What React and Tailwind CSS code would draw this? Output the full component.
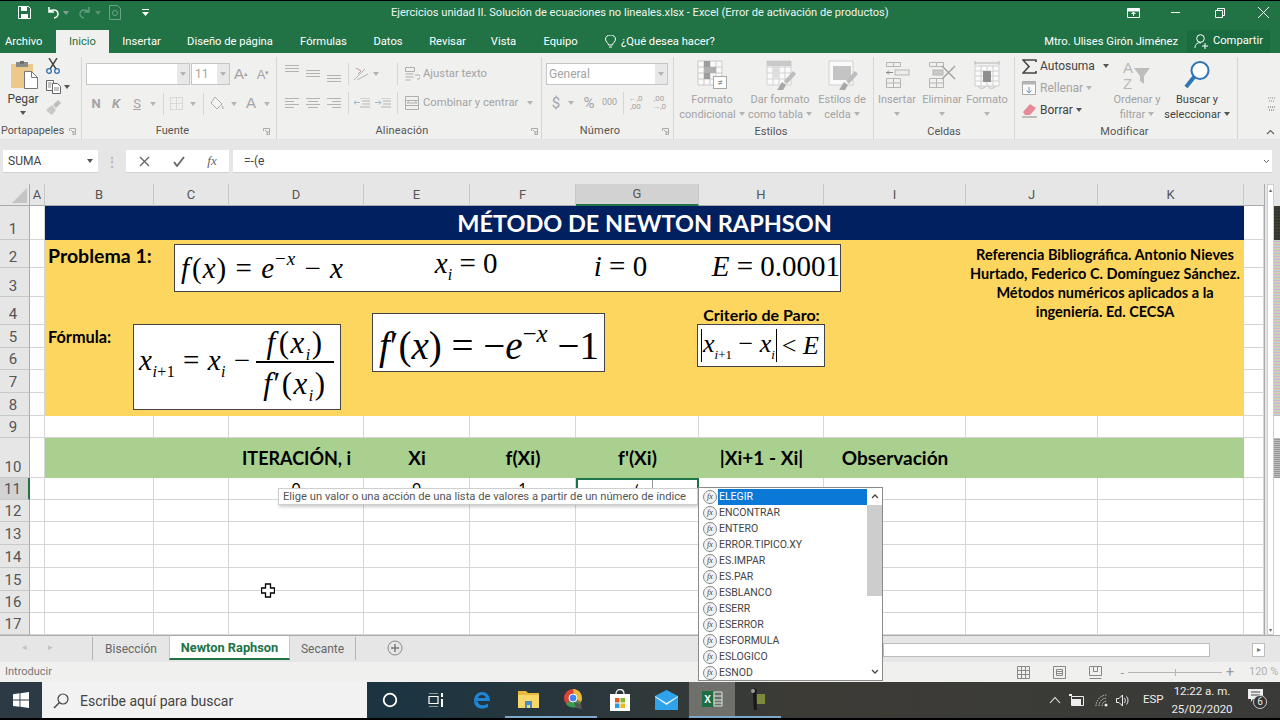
const cols = ["B", "C", "D", "E", "F", "G", "H", "I", "J", "K"];
const gridCols = "grid-cols-[30px_15px_109px_75px_135px_106px_106px_123px_125px_142px_132px_146px_20px]";
const gridRows = "grid-rows-[22px_34px_28px_29px_28px_23px_22px_23px_23px_22px_40px_22px_22px_23px_23px_23px_22px_22px]";
const lowRows = [12, 13, 14, 15, 16, 17];
const funcs = ["ELEGIR", "ENCONTRAR", "ENTERO", "ERROR.TIPICO.XY", "ES.IMPAR", "ES.PAR", "ESBLANCO", "ESERR", "ESERROR", "ESFORMULA", "ESLOGICO", "ESNOD"];
const tabs = [
  ["Insertar", "w-[65px]"],
  ["Diseño de página", "w-[112px]"],
  ["Fórmulas", "w-[75px]"],
  ["Datos", "w-[54px]"],
  ["Revisar", "w-[65px]"],
  ["Vista", "w-[47px]"],
  ["Equipo", "w-[67px]"],
];

function Caret({ dark, className = "" }) {
  return (
    <svg width="6" height="4" viewBox="0 0 6 4" className={className}>
      <path d="M0 0h6L3 4z" fill={dark ? "#555" : "#b4b4b4"} />
    </svg>
  );
}

function Launcher() {
  return (
    <svg width="7" height="7" viewBox="0 0 7 7">
      <path d="M.5 3V.5H6.500V6.500H3.500M2 2l3 3M5 3v2H3" fill="none" stroke="#aaa" />
    </svg>
  );
}

function Sep({ h = "h-[22px]", className = "" }) {
  return <div className={`w-px bg-[#d5d5d5] ${h} ${className}`} />;
}

function GroupLabel({ children, w, launcher }) {
  return (
    <div className="h-[16px] pt-[1px] flex items-center text-[11px] text-[#555] tracking-[.2px]">
      <div className={`${w} text-center`}>{children}</div>
      {launcher && <div className="ml-[4px] flex"><Launcher /></div>}
    </div>
  );
}

function Lines({ aligns }) {
  // small stack of text lines for the alignment buttons
  return (
    <svg width="14" height="11" viewBox="0 0 14 11">
      {aligns.map((a, i) => (
        <rect key={i} x={a[0]} y={i * 3} width={a[1]} height="1" fill="#b3b3b3" />
      ))}
    </svg>
  );
}

function VAlign({ y }) {
  return (
    <svg width="14" height="18" viewBox="0 0 14 18">
      {[0, 3, 6].map((d) => (
        <rect key={d} x="0" y={y + d} width="14" height="1" fill="#b3b3b3" />
      ))}
    </svg>
  );
}

function Paste() {
  return (
    <svg width="28" height="28" viewBox="0 0 28 28">
      <rect x="0" y="3" width="22" height="24" fill="#ecc98a" />
      <rect x="5" y="1" width="12" height="5" fill="#8a8a8a" />
      <rect x="9" y="0" width="4" height="3" fill="#6f6f6f" />
      <path d="M13.500 10.500h7l6 6v11h-13z" fill="#fff" stroke="#777" />
      <path d="M20.500 10.500v6h6" fill="none" stroke="#777" />
    </svg>
  );
}

function Scissors() {
  return (
    <svg width="14" height="16" viewBox="0 0 14 16">
      <path d="M3 0l7 11M11 0L4 11" stroke="#444" strokeWidth="1.400" fill="none" />
      <circle cx="3" cy="13" r="2.300" fill="none" stroke="#2f6fa8" strokeWidth="1.300" />
      <circle cx="11" cy="13" r="2.300" fill="none" stroke="#2f6fa8" strokeWidth="1.300" />
    </svg>
  );
}

function CopyIcon() {
  return (
    <svg width="15" height="14" viewBox="0 0 15 14">
      <path d="M.5.500h7v10h-7z" fill="#fff" stroke="#666" />
      <path d="M6.500 3.500h5l3 3v7h-8z" fill="#fff" stroke="#666" />
      <path d="M8 8h5M8 10h5M2 3h4M2 5h3M2 7h3" stroke="#888" />
    </svg>
  );
}

function Brush() {
  return (
    <svg width="16" height="15" viewBox="0 0 16 15">
      <path d="M0 10l6-5 4 5-4 5-3-2z" fill="#c8c8c8" />
      <path d="M7 5l5-5 3 3-5 5z" fill="#bdbdbd" />
    </svg>
  );
}

function CellsIcon({ children }) {
  return (
    <svg width="34" height="30" viewBox="0 0 34 30">
      {children}
    </svg>
  );
}

function TableLines({ x = 0, y = 0, w = 24, h = 24, n = 4, color = "#c9c9c9" }) {
  const xs = [];
  for (let i = 0; i <= n; i++) xs.push(i);
  return (
    <g>
      <rect x={x} y={y} width={w} height={h} fill="#fafafa" />
      {xs.map((i) => (
        <path key={`v${i}`} d={`M${x + (i * w) / n} ${y}v${h}`} stroke={color} />
      ))}
      {xs.map((i) => (
        <path key={`h${i}`} d={`M${x} ${y + (i * h) / n}h${w}`} stroke={color} />
      ))}
    </g>
  );
}

function PaintTip() {
  return (
    <g>
      <path d="M14 30l5-8 4 3-3 5z" fill="#a8a8a8" />
      <path d="M21 21l9-10 3 3-9 10z" fill="#bdbdbd" />
    </g>
  );
}

function BigButton({ w, icon, lines, dark }) {
  const color = dark ? "text-[#444]" : "text-[#a3a3a3]";
  return (
    <div className={`${w} flex flex-col items-center`}>
      <div className="h-[33px] flex items-end justify-center">{icon}</div>
      <div className={`mt-[2px] text-[11px] leading-[15px] whitespace-nowrap text-center ${color}`}>
        <div>{lines[0]}</div>
        <div className="h-[14px] flex items-center justify-center gap-[3px]">
          {lines[1] && <span>{lines[1]}</span>}
          <Caret dark={dark} />
        </div>
      </div>
    </div>
  );
}

function Ribbon() {
  const inputBox = "h-[22px] bg-white border border-[#c6c6c6] flex items-stretch";
  const smallText = "text-[11.300px] text-[#a3a3a3]";
  return (
    <div className="h-[87px] bg-[#f0f0ef] flex pt-[4px] text-[#444] border-b border-[#e0e0e0]">
      {/* Portapapeles */}
      <div className="w-[82px] border-r border-[#d5d5d5] flex flex-col">
        <div className="flex-1 flex">
          <div className="w-[46px] flex flex-col items-center">
            <div className="pt-[4px] pl-[3px]"><Paste /></div>
            <div className="text-[12px] leading-[14px] mt-[3px]">Pegar</div>
            <Caret dark className="mt-[5px]" />
          </div>
          <div className="flex flex-col items-start">
            <div className="mt-[1px]"><Scissors /></div>
            <div className="mt-[6px] flex items-center gap-[3px]"><CopyIcon /><Caret dark /></div>
            <div className="mt-[6px]"><Brush /></div>
          </div>
        </div>
        <div className="h-[16px] pt-[1px] flex items-center text-[10.700px] text-[#555] whitespace-nowrap">
          <span className="ml-[1px] w-[68px]">Portapapeles</span>
          <Launcher />
        </div>
      </div>

      {/* Fuente */}
      <div className="w-[195px] border-r border-[#d5d5d5] flex flex-col">
        <div className="flex-1 pt-[6px]">
          <div className="flex items-center pl-[4px]">
            <div className={`${inputBox} w-[104px] justify-end`}>
              <div className="w-[12px] bg-[#e8e8e8] flex items-center justify-center"><Caret /></div>
            </div>
            <div className={`${inputBox} w-[39px] ml-[1px] justify-between`}>
              <span className="text-[12px] text-[#a3a3a3] pl-[3px] self-center">11</span>
              <div className="w-[12px] bg-[#e8e8e8] flex items-center justify-center"><Caret /></div>
            </div>
            <div className="w-[22px] text-center text-[15px] text-[#a3a3a3] font-['Liberation_Sans',sans-serif]">A<sup className="text-[7px]">▴</sup></div>
            <div className="w-[22px] text-center text-[13px] text-[#a3a3a3] font-['Liberation_Sans',sans-serif]">A<sup className="text-[7px]">▾</sup></div>
          </div>
          <div className="flex items-center pl-[4px] mt-[7px] h-[22px]">
            <div className="w-[20px] text-center text-[13px] font-bold text-[#a3a3a3]">N</div>
            <div className="w-[20px] text-center text-[13px] font-bold italic text-[#a3a3a3]">K</div>
            <div className="w-[22px] text-center text-[13px] underline text-[#a3a3a3]">S</div>
            <div className="w-[10px] flex justify-center"><Caret /></div>
            <Sep className="ml-[5px]" />
            <div className="w-[24px] flex justify-center">
              <svg width="13" height="13" viewBox="0 0 13 13"><path d="M.5.500h12v12H.500zM6.500.500v12M.5 6.500h12" fill="none" stroke="#c4c4c4" strokeDasharray="1 1" /></svg>
            </div>
            <div className="w-[10px] flex justify-center"><Caret /></div>
            <Sep className="ml-[5px]" />
            <div className="w-[26px] flex justify-center">
              <svg width="15" height="15" viewBox="0 0 15 15"><path d="M5 1l7 7-5 5-6-6z" fill="#f4f4f4" stroke="#adadad" /><path d="M12 9c2 2 2 4 1 4s-2-2-1-4z" fill="#bdbdbd" /></svg>
            </div>
            <div className="w-[8px] flex justify-center"><Caret /></div>
            <div className="w-[26px] text-center text-[15px] text-[#a3a3a3] font-['Liberation_Sans',sans-serif]">A</div>
            <div className="w-[6px] flex justify-center"><Caret /></div>
          </div>
        </div>
        <div className="h-[16px] pt-[1px] flex items-center text-[11px] text-[#555]">
          <div className="w-[181px] text-center">Fuente</div>
          <Launcher />
        </div>
      </div>

      {/* Alineación */}
      <div className="w-[265px] border-r border-[#d5d5d5] flex flex-col">
        <div className="flex-1 pt-[6px]">
          <div className="flex items-center pl-[4px] h-[22px]">
            <div className="w-[21px] flex justify-center"><VAlign y={0} /></div>
            <div className="w-[21px] flex justify-center"><VAlign y={5} /></div>
            <div className="w-[21px] flex justify-center"><VAlign y={10} /></div>
            <Sep className="ml-[4px]" />
            <div className="w-[24px] flex justify-center">
              <svg width="16" height="14" viewBox="0 0 16 14"><path d="M1 13L12 2M4 13l11-6" stroke="#b3b3b3" fill="none" /><path d="M3 1l5 3-3 3" stroke="#c79aa0" fill="none" /></svg>
            </div>
            <div className="w-[6px] flex justify-center"><Caret /></div>
            <Sep className="ml-[18px]" />
            <div className="ml-[7px] flex">
              <svg width="15" height="14" viewBox="0 0 15 14"><path d="M.5.500h9v4h-9zM.5 7h8M.5 10h8M.5 13h5M10 8h4a2 2 0 0 1-2 4" fill="none" stroke="#aeaeae" /></svg>
            </div>
            <div className={`${smallText} ml-[3px] whitespace-nowrap`}>Ajustar texto</div>
          </div>
          <div className="flex items-center pl-[4px] mt-[7px] h-[22px]">
            <div className="w-[21px] flex justify-center"><Lines aligns={[[0, 14], [0, 9], [0, 14], [0, 9]]} /></div>
            <div className="w-[21px] flex justify-center"><Lines aligns={[[0, 14], [2, 10], [0, 14], [2, 10]]} /></div>
            <div className="w-[21px] flex justify-center"><Lines aligns={[[0, 14], [5, 9], [0, 14], [5, 9]]} /></div>
            <Sep className="ml-[4px]" />
            <div className="w-[2px]" />
            <div className="w-[21px] flex justify-center">
              <svg width="16" height="11" viewBox="0 0 16 11"><path d="M6 0h10M8 3h8M8 6h8M6 9h10" stroke="#b3b3b3" /><path d="M6 4.500H0M2 2.500l-2 2 2 2" stroke="#9fb4c4" fill="none" /></svg>
            </div>
            <div className="w-[21px] flex justify-center">
              <svg width="16" height="11" viewBox="0 0 16 11"><path d="M6 0h10M8 3h8M8 6h8M6 9h10" stroke="#b3b3b3" /><path d="M0 4.500h6M4 2.500l2 2-2 2" stroke="#9fb4c4" fill="none" /></svg>
            </div>
            <Sep className="ml-[4px]" />
            <div className="ml-[7px] flex">
              <svg width="14" height="14" viewBox="0 0 14 14"><path d="M.5.500h13v13H.500zM.5 4.500h13M.5 9.500h13M2 7h10M2 7l2-1.500M12 7l-2-1.500" fill="none" stroke="#aeaeae" /></svg>
            </div>
            <div className={`${smallText} ml-[4px] w-[96px] whitespace-nowrap`}>Combinar y centrar</div>
            <Caret className="ml-[8px]" />
          </div>
        </div>
        <GroupLabel w="w-[250px]" launcher>Alineación</GroupLabel>
      </div>

      {/* Número */}
      <div className="w-[132px] border-r border-[#d5d5d5] flex flex-col">
        <div className="flex-1 pt-[6px]">
          <div className="pl-[4px]">
            <div className={`${inputBox} w-[122px] justify-between`}>
              <span className="text-[12px] text-[#a3a3a3] pl-[2px] self-center">General</span>
              <div className="w-[12px] bg-[#e8e8e8] flex items-center justify-center"><Caret /></div>
            </div>
          </div>
          <div className="flex items-center pl-[4px] mt-[7px] h-[22px] text-[#a3a3a3]">
            <div className="w-[20px] text-center text-[15px]">$</div>
            <div className="w-[10px] flex justify-center"><Caret /></div>
            <div className="w-[26px] text-center text-[15px]">%</div>
            <div className="w-[14px] text-center text-[9px]">000</div>
            <Sep className="ml-[7px]" />
            <div className="w-[23px] text-center text-[8px] leading-[8px] whitespace-nowrap">←,0<br />,00</div>
            <div className="w-[24px] text-center text-[8px] leading-[8px] whitespace-nowrap">,00<br />→,0</div>
          </div>
        </div>
        <GroupLabel w="w-[116px]" launcher>Número</GroupLabel>
      </div>

      {/* Estilos */}
      <div className="w-[200px] border-r border-[#d5d5d5] flex flex-col">
        <div className="flex-1 flex pl-[4px]">
          <BigButton
            w="w-[68px]"
            lines={["Formato", "condicional"]}
            icon={
              <CellsIcon>
                <TableLines x={3} y={1} w={24} h={24} />
                <rect x="9" y="1" width="6" height="6" fill="#9d9d9d" />
                <rect x="9" y="7" width="12" height="6" fill="#b0b0b0" />
                <rect x="9" y="13" width="6" height="6" fill="#9d9d9d" />
                <rect x="18.500" y="16.500" width="13" height="12" fill="#fff" stroke="#a8a8a8" />
                <text x="25" y="26" fontSize="10" textAnchor="middle" fill="#808080">≠</text>
              </CellsIcon>
            }
          />
          <BigButton
            w="w-[68px]"
            lines={["Dar formato", "como tabla"]}
            icon={
              <CellsIcon>
                <TableLines x={4} y={1} w={24} h={24} color="#d2d2d2" />
                <rect x="4" y="1" width="24" height="5" fill="#c9c9c9" />
                <rect x="10" y="6" width="6" height="12" fill="#dedede" />
                <PaintTip />
              </CellsIcon>
            }
          />
          <BigButton
            w="w-[56px]"
            lines={["Estilos de", "celda"]}
            icon={
              <CellsIcon>
                <TableLines x={4} y={1} w={24} h={24} n={1} color="#cfcfcf" />
                <rect x="8" y="6" width="18" height="14" fill="#c4c4c4" />
                <PaintTip />
              </CellsIcon>
            }
          />
        </div>
        <div className="h-[16px] pt-[1px] text-[11px] text-[#555] leading-[15px] text-center pr-[5px]">Estilos</div>
      </div>

      {/* Celdas */}
      <div className="w-[141px] border-r border-[#d5d5d5] flex flex-col">
        <div className="flex-1 flex">
          <BigButton
            w="w-[46px]"
            lines={["Insertar"]}
            icon={
              <CellsIcon>
                <path d="M6.500 2.500h14v4h-14zM13.500 2.500v4M6.500 18.500h14v9h-14zM13.500 18.500v9M6.500 23h14" fill="none" stroke="#b5b5b5" />
                <rect x="15" y="10" width="14" height="5" fill="#ededed" stroke="#b5b5b5" />
                <path d="M6 12.500h7M9 10.500l-2 2 2 2" stroke="#8c8c8c" fill="none" />
              </CellsIcon>
            }
          />
          <BigButton
            w="w-[44px]"
            lines={["Eliminar"]}
            icon={
              <CellsIcon>
                <path d="M4.500 2.500h14v4h-14zM11.500 2.500v4M4.500 18.500h14v9h-14zM11.500 18.500v9M4.500 23h14" fill="none" stroke="#b5b5b5" />
                <rect x="8" y="10" width="10" height="5" fill="#c9c9c9" stroke="#b5b5b5" />
                <path d="M17 6l13 13M30 6L17 19" stroke="#a5a5a5" strokeWidth="1.500" />
              </CellsIcon>
            }
          />
          <BigButton
            w="w-[46px]"
            lines={["Formato"]}
            icon={
              <CellsIcon>
                <path d="M5 3h24M5 1v4M29 1v4" stroke="#b5b5b5" fill="none" />
                <TableLines x={5} y={6} w={24} h={20} n={4} color="#d0d0d0" />
                <rect x="13" y="11" width="8" height="11" fill="#8f8f8f" />
                <path d="M8 26c1 3 6 3 8 0M18 26c1 3 6 3 8 0" stroke="#bdbdbd" fill="none" />
              </CellsIcon>
            }
          />
        </div>
        <div className="h-[16px] pt-[1px] text-[11px] text-[#555] leading-[15px] text-center">Celdas</div>
      </div>

      {/* Modificar */}
      <div className="w-[223px] border-r border-[#d5d5d5] flex flex-col">
        <div className="flex-1 flex">
          <div className="w-[99px] pl-[7px] -mt-[2px] flex flex-col text-[12px]">
            <div className="h-[22px] flex items-center">
              <svg width="15" height="15" viewBox="0 0 15 15"><path d="M14 3V1H1l6 6.500L1 14h13v-2" fill="none" stroke="#444" strokeWidth="1.600" /></svg>
              <span className="ml-[3px] w-[63px]">Autosuma</span>
              <Caret dark />
            </div>
            <div className="h-[22px] flex items-center text-[#a3a3a3]">
              <svg width="15" height="15" viewBox="0 0 15 15"><path d="M.5.500h13v13H.500z" fill="#fafafa" stroke="#a9a9a9" /><path d="M.5.500h13v3H.500z" fill="#b5b5b5" /><path d="M7 6v6M4.500 9.500L7 12l2.500-2.500" stroke="#6f93b5" fill="none" /></svg>
              <span className="ml-[3px]">Rellenar</span>
              <Caret className="ml-[3px]" />
            </div>
            <div className="h-[22px] flex items-center">
              <svg width="15" height="15" viewBox="0 0 15 15"><path d="M1 9l7-8 6 4-6 7H3z" fill="#e58a96" /><path d="M0 14h15" stroke="#888" /></svg>
              <span className="ml-[3px]">Borrar</span>
              <Caret dark className="ml-[3px]" />
            </div>
          </div>
          <BigButton
            w="w-[46px]"
            lines={["Ordenar y", "filtrar"]}
            icon={
              <svg width="30" height="30" viewBox="0 0 30 30">
                <text x="1" y="13" fontSize="15" fill="#b9b9b9" fontFamily="Liberation Sans">A</text>
                <text x="1" y="29" fontSize="15" fill="#b9b9b9" fontFamily="Liberation Sans">Z</text>
                <path d="M12 8h16l-6 8v8l-4-3v-5z" fill="#bdbdbd" />
              </svg>
            }
          />
          <BigButton
            w="w-[74px]"
            dark
            lines={["Buscar y", "seleccionar"]}
            icon={
              <svg width="28" height="30" viewBox="0 0 28 30">
                <circle cx="17" cy="10.500" r="8.500" fill="#fff" stroke="#2e75b6" strokeWidth="2" />
                <path d="M11 17L3 27" stroke="#2e75b6" strokeWidth="4" />
              </svg>
            }
          />
        </div>
        <div className="h-[16px] pt-[1px] text-[11px] text-[#555] leading-[15px] text-center pr-[3px] tracking-[.2px]">Modificar</div>
      </div>

      <div className="flex-1 flex flex-col items-end justify-end pr-[5px] pb-[4px]">
        <svg className="mb-[4px]" width="7" height="5" viewBox="0 0 7 5"><path d="M0 1h7M1 4h5" stroke="#888" strokeDasharray="1 1" /></svg>
        <svg className="mb-[18px]" width="7" height="5" viewBox="0 0 7 5"><path d="M0 1h7M1 4h5" stroke="#666" strokeDasharray="1 1" /></svg>
        <svg width="9" height="6" viewBox="0 0 9 6"><path d="M1 5l3.500-3.500L8 5" fill="none" stroke="#666" strokeWidth="1.200" /></svg>
      </div>
    </div>
  );
}

function FormulaBar() {
  return (
    <div className="h-[44px] bg-[#e6e6e6] pt-[10px] flex items-start">
      <div className="ml-[3px] w-[95px] h-[23px] bg-white border-b border-[#d0d0d0] flex items-center justify-between px-[5px] text-[12px] text-[#444]">
        SUMA
        <Caret dark />
      </div>
      <div className="w-[28px] h-[23px] flex items-center justify-center text-[#b5b5b5] text-[12px] font-bold">⋮</div>
      <div className="w-[103px] h-[23px] bg-white border-b border-[#d0d0d0] flex items-center text-[#666]">
        <div className="w-[36px] flex justify-center">
          <svg width="11" height="11" viewBox="0 0 11 11"><path d="M1 1l9 9M10 1l-9 9" stroke="#666" strokeWidth="1.400" /></svg>
        </div>
        <div className="w-[33px] flex justify-center">
          <svg width="12" height="11" viewBox="0 0 12 11"><path d="M1 6l3 4 7-9" fill="none" stroke="#666" strokeWidth="1.800" /></svg>
        </div>
        <div className="w-[34px] text-center text-[13px] italic font-['Liberation_Serif',serif]">fx</div>
      </div>
      <div className="ml-[4px] w-[1039px] h-[23px] bg-white border-b border-[#d0d0d0] flex items-center justify-between pl-[11px] pr-[2px] text-[12px] text-[#444]">
        =-(e
        <svg width="7" height="5" viewBox="0 0 7 5"><path d="M1 1l2.500 2.500L6 1" fill="none" stroke="#666" /></svg>
      </div>
    </div>
  );
}

function Fn({ children, className = "" }) {
  return <i className={className}>{children}</i>;
}

function Sup({ children, size = "text-[19px]", up = "align-[13px]" }) {
  return <span className={`${size} ${up} leading-none`}>{children}</span>;
}

function Sub({ children, size = "text-[16px]", down = "align-[-7px]" }) {
  return <span className={`${size} ${down} leading-none`}>{children}</span>;
}

function EquationBox({ className, children }) {
  return (
    <div className={`absolute bg-white border border-[#444] font-['Liberation_Serif',serif] text-black flex items-center whitespace-nowrap leading-none ${className}`}>
      {children}
    </div>
  );
}

function YellowPanel() {
  return (
    <div className="col-span-10 row-span-7 grid grid-cols-subgrid grid-rows-subgrid bg-[#fdd660] relative font-['Lato',sans-serif] font-bold text-black">
      <div className="col-start-1 row-start-1 pl-[3px] pt-[4px] text-[19.500px] leading-[24px] whitespace-nowrap">Problema 1:</div>
      <div className="col-start-1 row-start-4 pl-[3px] text-[16.300px] leading-[23px] whitespace-nowrap">Fórmula:</div>
      <div className="col-start-7 row-start-3 self-end text-center text-[16px] leading-[20px] whitespace-nowrap">Criterio de Paro:</div>
      <div className="col-start-9 col-span-2 row-start-1 row-span-4 pt-[5px] text-center text-[14.500px] leading-[19px] whitespace-nowrap">
        Referencia Bibliográfica. Antonio Nieves<br />
        Hurtado, Federico C. Domínguez Sánchez.<br />
        Métodos numéricos aplicados a la<br />
        ingeniería. Ed. CECSA
      </div>

      <EquationBox className="left-[129px] top-[4px] w-[667px] h-[48px] text-[29px] font-normal pl-[6px] pb-[4px]">
        <div className="w-[254px] tracking-[1px]"><Fn className="pr-[2px]">f</Fn>(<Fn>x</Fn>) = <Fn>e</Fn><Sup>−<Fn>x</Fn></Sup> − <Fn>x</Fn></div>
        <div className="w-[159px]"><Fn>x</Fn><Sub><Fn>i</Fn></Sub> = 0</div>
        <div className="w-[118px]"><Fn>i</Fn> = 0</div>
        <div><Fn>E</Fn> = 0.0001</div>
      </EquationBox>

      <EquationBox className="left-[88px] top-[84px] w-[208px] h-[86px] text-[29px] font-normal pl-[5px] pb-[8px]">
        <div className="w-[117px] tracking-[.5px]"><Fn>x</Fn><Sub><Fn>i</Fn>+1</Sub> = <Fn>x</Fn><Sub><Fn>i</Fn></Sub> − </div>
        <div className="w-[78px] flex flex-col items-stretch text-center text-[31px] tracking-[1.500px]">
          <div className="h-[36px] border-b-2 border-black"><Fn className="pr-[2px]">f</Fn>(<Fn>x</Fn><Sub><Fn>i</Fn></Sub>)</div>
          <div className="h-[36px] pt-[5px]"><Fn>f</Fn>′(<Fn>x</Fn><Sub><Fn>i</Fn></Sub>)</div>
        </div>
      </EquationBox>

      <EquationBox className="left-[327px] top-[73px] w-[233px] h-[59px] text-[39px] font-normal pl-[6px]">
        <div>
          <Fn>f</Fn>′(<Fn>x</Fn>) = −<Fn>e</Fn><Sup size="text-[25px]" up="align-[17px]">−<Fn>x</Fn></Sup> −1
        </div>
      </EquationBox>

      <EquationBox className="left-[652px] top-[84px] w-[128px] h-[43px] text-[26px] font-normal pl-[3px]">
        <div className="border-x border-black px-[1px] h-[33px] flex items-center">
          <span><Fn>x</Fn><Sub size="text-[13px]"><Fn>i</Fn>+1</Sub> − <Fn>x</Fn><Sub size="text-[13px]"><Fn>i</Fn></Sub></span>
        </div>
        <div className="ml-[5px]">&lt; <Fn>E</Fn></div>
      </EquationBox>
    </div>
  );
}

function RowHead({ n, active }) {
  return (
    <div className={`flex items-end justify-center pr-[3px] text-[15px] leading-[20px] text-[#555] border-b border-[#c8c8c8] font-['Roboto',sans-serif] ${active ? "bg-[#d2d2d2] border-r-2 border-r-[#217346]" : "bg-[#e6e6e6] border-r border-r-[#ababab]"}`}>
      {n}
    </div>
  );
}

const cell = "bg-white border-r border-b border-[#d6d6d6]";

function Sheet() {
  return (
    <div className={`w-[1265px] grid ${gridCols} ${gridRows} border-r border-[#ababab] font-['Roboto',sans-serif] bg-white`}>
      {/* column headers */}
      <div className="bg-[#e6e6e6] border-r border-b border-[#ababab] flex items-end justify-end p-[2px]">
        <svg width="15" height="15" viewBox="0 0 15 15"><path d="M15 0v15H0z" fill="#c4c4c4" /></svg>
      </div>
      <div className="bg-[#e6e6e6] border-r border-b border-r-[#c8c8c8] border-b-[#ababab] flex items-center justify-center text-[13px] text-[#555]">A</div>
      {cols.map((c) => (
        <div
          key={c}
          className={`flex items-center justify-center text-[13px] text-[#555] border-r border-r-[#c8c8c8] ${c === "G" ? "bg-[#d2d2d2] border-b-2 border-b-[#217346]" : "bg-[#e6e6e6] border-b border-b-[#ababab]"}`}
        >
          {c}
        </div>
      ))}
      <div className="bg-[#e6e6e6] border-b border-[#ababab]" />

      {/* row 1 */}
      <RowHead n={1} />
      <div className={cell} />
      <div className="col-span-10 bg-[#002060] text-white font-['Lato',sans-serif] font-bold text-[23.500px] pt-[1px] flex items-center justify-center">
        MÉTODO DE NEWTON RAPHSON
      </div>
      <div className={cell} />

      {/* rows 2 to 8 */}
      <RowHead n={2} />
      <div className={cell} />
      <YellowPanel />
      <div className={cell} />
      {[3, 4, 5, 6, 7, 8].flatMap((n) => [
        <RowHead key={`h${n}`} n={n} />,
        <div key={`a${n}`} className={cell} />,
        <div key={`l${n}`} className={`${cell} col-start-13`} />,
      ])}

      {/* row 9 */}
      <RowHead n={9} />
      <div className={cell} />
      {cols.map((c) => <div key={c} className={cell} />)}
      <div className={cell} />

      {/* row 10 */}
      <RowHead n={10} />
      <div className={cell} />
      <div className="col-span-10 grid grid-cols-subgrid bg-[#a9d08e] font-['Lato',sans-serif] font-bold text-[19px] text-black items-center text-center pt-[1px]">
        <div /><div />
        <div className="whitespace-nowrap text-[18px]">ITERACIÓN, i</div>
        <div>Xi</div>
        <div>f(Xi)</div>
        <div>f'(Xi)</div>
        <div className="whitespace-nowrap">|Xi+1 - Xi|</div>
        <div>Observación</div>
      </div>
      <div className={cell} />

      {/* row 11 */}
      <RowHead n={11} active />
      <div className={cell} />
      {cols.map((c) =>
        c === "G" ? (
          <div key={c} className="bg-white border-x-2 border-t-2 border-[#217346] text-[15px] font-['Lato',sans-serif] leading-[20px]">
            <div className="h-[10px] w-[75px] border-r border-[#999] text-right pr-[6px] overflow-hidden">=-(e</div>
          </div>
        ) : (
          <div key={c} className={`${cell} text-center text-[15px] font-['Lato',sans-serif] leading-[20px]`}>
            {c === "D" && "0"}
            {c === "E" && "0"}
            {c === "F" && "1"}
          </div>
        )
      )}
      <div className={cell} />

      {/* rows 12 to 17 */}
      {lowRows.flatMap((n) => [
        <RowHead key={`h${n}`} n={n} />,
        <div key={`a${n}`} className={cell} />,
        ...cols.map((c) => <div key={`${c}${n}`} className={cell} />),
        <div key={`l${n}`} className={cell} />,
      ])}
    </div>
  );
}

function RightStrip() {
  return (
    <div className="flex-1 flex bg-[#e6e6e6]">
      <div className="w-[9px] pl-[2px] flex flex-col">
        <div className="h-[451px] w-[7px] bg-white flex flex-col justify-between items-center text-[6px] text-[#666] border border-[#cfcfcf]">
          <span>▴</span>
          <span>▾</span>
        </div>
      </div>
      <div className="flex-1 flex flex-col bg-white">
        <div className="h-[22px] bg-[#e6e6e6]" />
        <div className="h-[34px] bg-[repeating-linear-gradient(0deg,#3a3a34_0px,#3a3a34_1px,#27382f_1px,#27382f_2px,#4a3a30_2px,#4a3a30_3px)]" />
        <div className="h-[176px] bg-[repeating-linear-gradient(0deg,#c9b6d6_0px,#c9b6d6_1px,#b9d6c4_1px,#b9d6c4_2px,#e2c9a8_2px,#e2c9a8_3px)]" />
        <div className="h-[22px]" />
        <div className="h-[40px] bg-[repeating-linear-gradient(0deg,#999_0px,#999_1px,#bbb_1px,#bbb_2px)]" />
      </div>
    </div>
  );
}

function SheetTabs() {
  return (
    <div className="h-[27px] bg-[#e6e6e6] flex items-start border-t border-[#ababab] text-[12px] text-[#666]">
      <div className="w-[92px] h-[24px] flex items-center text-[#c0c0c0] text-[9px]">
        <span className="ml-[22px]">◂</span>
        <span className="ml-[21px]">▸</span>
      </div>
      <div className="w-[77px] h-[23px] mt-[1px] pt-[1px] border-l border-[#b5b5b5] flex items-center justify-center">Bisección</div>
      <div className="w-[121px] h-[24px] pt-[1px] bg-white border-x border-[#c8c8c8] border-b-2 border-b-[#217346] flex items-center justify-center font-bold text-[12.800px] text-[#217346]">Newton Raphson</div>
      <div className="w-[66px] h-[23px] mt-[1px] pt-[1px] border-r border-[#b5b5b5] flex items-center justify-center">Secante</div>
      <div className="ml-[31px] mt-[4px] flex">
        <svg width="16" height="16" viewBox="0 0 16 16"><circle cx="8" cy="8" r="7" fill="none" stroke="#888" /><path d="M8 4v8M4 8h8" stroke="#777" strokeWidth="1.400" /></svg>
      </div>
      <div className="ml-[480px] mt-[7px] w-[327px] h-[14px] bg-white border border-[#bdbdbd]" />
      <div className="w-[42px]" />
      <div className="mt-[7px] w-[13px] h-[14px] bg-white border border-[#bdbdbd] flex items-center justify-center text-[8px] text-[#777]">▸</div>
    </div>
  );
}

function StatusBar() {
  return (
    <div className="h-[20px] bg-[#f0f0ef] flex items-center text-[11px] text-[#777]">
      <span className="ml-[5px]">Introducir</span>
      <div className="ml-auto flex items-center mr-[2px] text-[#888]">
        <svg width="13" height="13" viewBox="0 0 13 13"><path d="M.5.500h12v12H.500zM4.500.500v12M8.500.500v12M.5 4.500h12M.5 8.500h12" fill="none" stroke="#888" /></svg>
        <svg className="ml-[23px]" width="13" height="13" viewBox="0 0 13 13"><path d="M.5.500h12v12H.500zM3.500 3.500h6v6h-6zM3.500 5.500h6M3.500 7.500h6" fill="none" stroke="#888" /></svg>
        <svg className="ml-[23px]" width="13" height="13" viewBox="0 0 13 13"><path d="M.5.500h12v9H.500zM4.500.500v5h4v-5M.5 12.500h12" fill="none" stroke="#888" /></svg>
        <span className="ml-[18px] text-[13px] leading-none text-[#999]">-</span>
        <div className="ml-[4px] w-[94px] h-px bg-[#b5b5b5] flex items-center justify-center"><div className="w-px h-[7px] bg-[#b5b5b5]" /></div>
        <span className="ml-[4px] text-[14px] leading-none text-[#999]">+</span>
        <span className="ml-[15px] w-[29px] whitespace-nowrap text-[#b0b0b0]">120 %</span>
      </div>
    </div>
  );
}

function Taskbar() {
  const item = "w-[46px] h-[36px] flex items-center justify-center";
  const open = "border-b-2 border-b-[#7fa8c9]";
  return (
    <div className="h-[38px] bg-black flex items-start">
      <div className="h-[36px] flex-1 flex bg-[linear-gradient(90deg,#1b3442_0%,#1b3442_30%,#3c3b36_62%,#3a3a38_100%)]">
        <div className="w-[42px] flex items-center justify-center bg-[#2c3a45]">
          <svg width="16" height="16" viewBox="0 0 16 16"><path d="M0 2.200l6.500-.9v6.300H0zM7.400 1.200L16 0v7.600H7.400zM0 8.500h6.500v6.300L0 13.900zM7.400 8.500H16V16l-8.600-1.200z" fill="#fff" /></svg>
        </div>
        <div className="w-[325px] pt-[2px] bg-[#f2f2f2] flex items-center text-[14px] text-[#444]">
          <svg className="ml-[11px]" width="16" height="16" viewBox="0 0 16 16"><circle cx="10" cy="6" r="5" fill="none" stroke="#444" strokeWidth="1.200" /><path d="M6.500 9.500L1 15" stroke="#444" strokeWidth="1.400" /></svg>
          <span className="ml-[11px] whitespace-nowrap">Escribe aquí para buscar</span>
        </div>
        <div className={item}>
          <svg width="16" height="16" viewBox="0 0 16 16"><circle cx="8" cy="8" r="6.300" fill="none" stroke="#fff" strokeWidth="1.800" /></svg>
        </div>
        <div className={item}>
          <svg width="16" height="14" viewBox="0 0 16 14"><path d="M1 0h9M1 3.500h9v7H1zM1 14h9" fill="none" stroke="#fff" strokeWidth="1.200" /><path d="M13 0h2v4h-2zM13 6h2v8h-2z" fill="#fff" /></svg>
        </div>
        <div className={item}>
          <svg width="20" height="20" viewBox="0 0 20 20"><path d="M2 11h16C18 5 14 2 10 2 5 2 2 6 2 11c0 5 4 7.500 8 7.500 2.500 0 4.500-.6 6-1.500v-3.500c-1.500 1-3.500 1.800-5.500 1.800-2.500 0-4.500-1.300-4.500-3.800M6 8c.5-2 2-3 4-3s3.500 1 3.800 3z" fill="#1f86d6" fillRule="evenodd" /></svg>
        </div>
        <div className={`${item} ${open}`}>
          <svg width="21" height="18" viewBox="0 0 21 18"><path d="M0 1h8l2 2h11v3H0z" fill="#e9b93d" /><path d="M0 5h21v13H0z" fill="#f7d66a" /><path d="M7 11h7v7h-2v-3H9v3H7z" fill="#4a8cc2" /></svg>
        </div>
        <div className={`${item} ${open}`}>
          <svg width="22" height="22" viewBox="0 0 22 22">
            <circle cx="10" cy="10" r="9" fill="#db4437" />
            <path d="M10 10L18 15A9 9 0 0 1 3 16z" fill="#3a9b4f" />
            <path d="M10 1a9 9 0 0 1 8 13l-6-4z" fill="#e8b93a" />
            <circle cx="10" cy="10" r="4" fill="#4285f4" stroke="#fff" />
            <path d="M11 14l7 2 1 5-6-1z" fill="#555" />
          </svg>
        </div>
        <div className={item}>
          <svg width="22" height="22" viewBox="0 0 22 22">
            <path d="M7 5c0-6 8-6 8 0" fill="none" stroke="#eee" strokeWidth="1.300" />
            <path d="M1 5h20v17H1z" fill="#fff" />
            <path d="M6 9h4.500v4.500H6z" fill="#e2572b" />
            <path d="M11.500 9H16v4.500h-4.500z" fill="#7db82f" />
            <path d="M6 14.500h4.500V19H6z" fill="#2f9ae0" />
            <path d="M11.500 14.500H16V19h-4.500z" fill="#f3b71b" />
          </svg>
        </div>
        <div className={item}>
          <svg width="23" height="20" viewBox="0 0 23 20"><path d="M0 6L11.500 0 23 6v14H0z" fill="#2ea3ea" /><path d="M0 6l11.500 7L23 6v1l-11.500 8L0 7z" fill="#e8f4fb" /></svg>
        </div>
        <div className={`${item} bg-[#6f6f6c] ${open}`}>
          <svg width="21" height="18" viewBox="0 0 21 18">
            <path d="M12 2h8v14h-8z" fill="none" stroke="#d8e8dc" />
            <path d="M12 6h8M12 10h8M12 13h8" stroke="#d8e8dc" />
            <path d="M0 1h11v16H0z" fill="#1d6f42" />
            <text x="5.500" y="13" textAnchor="middle" fontSize="10" fontWeight="700" fill="#fff" fontFamily="Liberation Sans">X</text>
          </svg>
        </div>
        <div className={`${item} ${open}`}>
          <svg width="20" height="24" viewBox="0 0 20 24"><path d="M6 1l3 2-1 6 1 14H6L5 8z" fill="#171717" /><rect x="9" y="7" width="8" height="10" fill="#7e8a3b" /><circle cx="5" cy="4" r="2" fill="#999" /></svg>
        </div>
        <div className="ml-auto flex items-center text-[#eee]">
          <svg width="12" height="8" viewBox="0 0 12 8"><path d="M1 7l5-5.500L11 7" fill="none" stroke="#eee" strokeWidth="1.100" /></svg>
          <svg className="ml-[8px]" width="16" height="12" viewBox="0 0 16 12"><path d="M2.500 2.500h12v9h-12z" fill="none" stroke="#eee" /><path d="M3 5h9v6H3z" fill="#eee" /><path d="M0 0h3v2H0z" fill="#eee" /></svg>
          <svg className="ml-[10px]" width="14" height="13" viewBox="0 0 14 13"><path d="M1 12a11 11 0 0 1 11-11M4 12a8 8 0 0 1 8-8M7 12a5 5 0 0 1 5-5" fill="none" stroke="#ccc" strokeDasharray="1.500 1" /><circle cx="11" cy="11" r="1.500" fill="#eee" /></svg>
          <svg className="ml-[7px]" width="14" height="13" viewBox="0 0 14 13"><path d="M.5 4.500h2.500L6.500 1v11L3 8.500H.5zM8.500 4c1 1.500 1 3.500 0 5M10.500 2.500c2 2 2 6 0 8" fill="none" stroke="#eee" /></svg>
          <span className="ml-[13px] w-[24px] text-[11.500px]">ESP</span>
          <div className="w-[70px] text-[11.500px] leading-[18px] text-center whitespace-nowrap">
            <div>12:22 a. m.</div>
            <div>25/02/2020</div>
          </div>
          <div className="ml-[11px] mr-[16px] w-[16px] h-[22px] relative">
            <svg width="15" height="13" viewBox="0 0 15 13"><path d="M0 0h15v10H5l-2 3v-3H0z" fill="#eee" /><path d="M3 3h9M3 6h9" stroke="#444" /></svg>
            <div className="absolute left-[5px] top-[6px] w-[14px] h-[14px] rounded-full bg-[#333] border border-[#ccc] text-[10px] leading-[12px] text-center">6</div>
          </div>
        </div>
      </div>
    </div>
  );
}

function Tooltip() {
  return (
    <div className="absolute left-[278px] top-[488px] w-[420px] h-[17px] bg-white border border-[#cfcfcf] shadow-[1px_2px_3px_rgba(0,0,0,.2)] text-[11.200px] leading-[15px] text-[#555] pl-[4px] whitespace-nowrap">
      Elige un valor o una acción de una lista de valores a partir de un número de índice
    </div>
  );
}

function AutoComplete() {
  return (
    <div className="absolute left-[698px] top-[487px] w-[185px] h-[194px] bg-white border border-[#8a8a8a] flex text-[10.500px] text-[#444]">
      <div className="flex-1 pt-[1px]">
        {funcs.map((f, i) => (
          <div key={f} className="h-[16px] flex items-center">
            <div className="ml-[4px] w-[14px] h-[14px] rounded-full border border-[#888] bg-[#f3f3f3] text-[8px] leading-[12px] text-center italic font-['Liberation_Serif',serif] text-[#333]">fx</div>
            <div className={`ml-[1px] flex-1 h-[16px] leading-[16px] pl-[1px] ${i === 0 ? "bg-[#0a78d7] text-white" : ""}`}>{f}</div>
          </div>
        ))}
      </div>
      <div className="w-[15px] flex flex-col bg-white">
        <div className="h-[17px] flex items-center justify-center">
          <svg width="8" height="5" viewBox="0 0 8 5"><path d="M1 4l3-3 3 3" fill="none" stroke="#444" strokeWidth="1.300" /></svg>
        </div>
        <div className="h-[91px] bg-[#cdcdcd]" />
        <div className="flex-1" />
        <div className="h-[17px] flex items-center justify-center">
          <svg width="8" height="5" viewBox="0 0 8 5"><path d="M1 1l3 3 3-3" fill="none" stroke="#444" strokeWidth="1.300" /></svg>
        </div>
      </div>
    </div>
  );
}

export default function App() {
  return (
    <div className="w-[1280px] h-[720px] relative overflow-hidden bg-[#e6e6e6] font-['Roboto',sans-serif] flex flex-col">
      {/* title bar */}
      <div className="h-[24px] bg-[#217346] border-t border-black flex items-center text-white">
        <div className="w-[391px] flex items-center">
          <svg className="ml-[18px]" width="13" height="13" viewBox="0 0 13 13"><path d="M.5.500h10l2 2v10H.500z" fill="none" stroke="#fff" /><path d="M3 1h6v4H3zM3 8h7v4H3z" fill="#fff" /></svg>
          <svg className="ml-[15px]" width="14" height="13" viewBox="0 0 14 13"><path d="M3 1v5h5M3 6c2-3 9-3 9 2 0 2-2 4-4 4" fill="none" stroke="#fff" strokeWidth="1.500" /></svg>
          <Caret className="ml-[3px] opacity-70" />
          <svg className="ml-[9px]" width="14" height="13" viewBox="0 0 14 13"><path d="M11 1v5H6M11 6C9 3 2 3 2 8c0 2 2 4 4 4" fill="none" stroke="#5f9c7d" strokeWidth="1.500" /></svg>
          <Caret className="ml-[3px] opacity-40" />
          <svg className="ml-[8px]" width="13" height="15" viewBox="0 0 13 15"><path d="M.5.500h8l3 3v11H.500z" fill="none" stroke="#6aa387" /><circle cx="6" cy="8" r="2.500" fill="none" stroke="#6aa387" /></svg>
          <svg className="ml-[20px]" width="7" height="7" viewBox="0 0 7 7"><path d="M0 0h7v1H0zM0 3h7L3.500 7z" fill="#fff" /></svg>
        </div>
        <div className="text-[11.100px] pt-[1px] whitespace-nowrap text-[#eef5f0]">Ejercicios unidad II. Solución de ecuaciones no lineales.xlsx - Excel (Error de activación de productos)</div>
        <div className="ml-auto flex items-center mr-[11px]">
          <svg width="13" height="10" viewBox="0 0 13 10"><path d="M.5.500h12v9H.500z" fill="none" stroke="#fff" /><path d="M1 1h11v2H1zM6.500 8V4M4.500 6l2-2 2 2" fill="#fff" stroke="#fff" /></svg>
          <div className="ml-[31px] w-[9px] h-px bg-white" />
          <svg className="ml-[35px]" width="10" height="10" viewBox="0 0 10 10"><path d="M.5 2.500h7v7h-7zM2.500 2.500v-2h7v7h-2" fill="none" stroke="#fff" /></svg>
          <svg className="ml-[33px]" width="11" height="11" viewBox="0 0 11 11"><path d="M0 0l11 11M11 0L0 11" stroke="#fff" /></svg>
        </div>
      </div>

      {/* ribbon tabs */}
      <div className="h-[29px] bg-[#217346] flex items-end text-[11.200px] text-white">
        <div className="w-[56px] h-[29px] flex items-center pl-[5px] pt-[7px]">Archivo</div>
        <div className="w-[53px] h-[23px] pt-[1px] bg-[#f0f0ef] text-[#217346] flex items-center justify-center">Inicio</div>
        {tabs.map(([t, w]) => (
          <div key={t} className={`${w} h-[29px] pt-[7px] flex items-center justify-center whitespace-nowrap`}>{t}</div>
        ))}
        <div className="h-[29px] pt-[7px] ml-[11px] flex items-center whitespace-nowrap">
          <svg width="11" height="14" viewBox="0 0 11 14"><path d="M3.500 10c0-2-3-3-3-6a5 4 0 0 1 10 0c0 3-3 4-3 6zM4 12h3" fill="none" stroke="#fff" /></svg>
          <span className="ml-[5px]">¿Qué desea hacer?</span>
        </div>
        <div className="ml-auto h-[29px] pt-[7px] flex items-center whitespace-nowrap">Mtro. Ulises Girón Jiménez</div>
        <div className="ml-[9px] mr-[10px] w-[83px] h-[23px] bg-[#1a6b3f] flex items-center justify-center">
          <svg width="15" height="15" viewBox="0 0 15 15"><circle cx="6.500" cy="4.500" r="3.800" fill="none" stroke="#fff" /><path d="M1 14c0-4 3-6 6-5M11 9v6M8 12h6" fill="none" stroke="#fff" /></svg>
          <span className="ml-[4px]">Compartir</span>
        </div>
      </div>

      <Ribbon />
      <FormulaBar />

      <div className="h-[451px] flex">
        <Sheet />
        <RightStrip />
      </div>

      <SheetTabs />
      <StatusBar />
      <Taskbar />

      <svg className="absolute left-[261px] top-[583px]" width="14" height="15" viewBox="0 0 14 15">
        <path d="M4.500 1h5v4h4v5h-4v4h-5v-4h-4V5h4z" fill="#fff" stroke="#000" strokeWidth="1.300" />
      </svg>
      <Tooltip />
      <AutoComplete />
    </div>
  );
}
